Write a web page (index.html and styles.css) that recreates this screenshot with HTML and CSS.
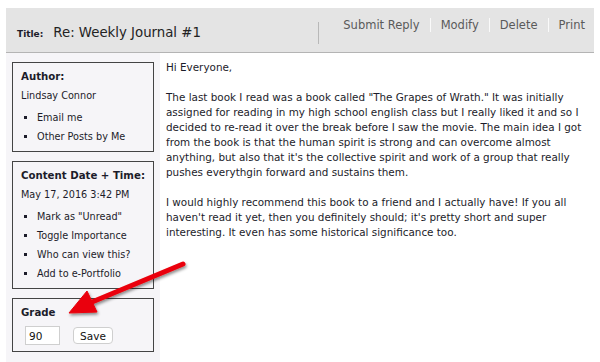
FILE: index.html
```html
<!DOCTYPE html>
<html lang="en">
<head>
    <meta charset="UTF-8">
    <title>Re: Weekly Journal #1</title>
    <link rel="stylesheet" href="styles.css">
</head>
<body>
    <div class="page">
        <div class="header">
            <div class="title">
                <span class="title-label">Title:</span>
                <span class="title-text">Re: Weekly Journal #1</span>
            </div>
            <div class="actions">
                <a href="#">Submit Reply</a>
                <a href="#">Modify</a>
                <a href="#">Delete</a>
                <a href="#">Print</a>
            </div>
        </div>

        <div class="content">
            <div class="sidebar">
                <div class="box">
                    <h4>Author:</h4>
                    <p>Lindsay Connor</p>
                    <ul>
                        <li>Email me</li>
                        <li>Other Posts by Me</li>
                    </ul>
                </div>
                <div class="box">
                    <h4>Content Date + Time:</h4>
                    <p>May 17, 2016 3:42 PM</p>
                    <ul>
                        <li>Mark as "Unread"</li>
                        <li>Toggle Importance</li>
                        <li>Who can view this?</li>
                        <li>Add to e-Portfolio</li>
                    </ul>
                </div>
                <div class="box grade">
                    <h4>Grade</h4>
                    <div class="grade-row">
                        <input type="text" value="90">
                        <button>Save</button>
                    </div>
                </div>
            </div>

            <div class="post">
                <p>Hi Everyone,</p>
                <p>The last book I read was a book called "The Grapes of Wrath." It was initially assigned for reading in my high school english class but I really liked it and so I decided to re-read it over the break before I saw the movie. The main idea I got from the book is that the human spirit is strong and can overcome almost anything, but also that it's the collective spirit and work of a group that really pushes everythgin forward and sustains them.</p>
                <p>I would highly recommend this book to a friend and I actually have! If you all haven't read it yet, then you definitely should; it's pretty short and super interesting. It even has some historical significance too.</p>
            </div>
        </div>

        <svg class="arrow" width="600" height="362" viewBox="0 0 600 362">
            <defs>
                <filter id="shadow" x="-20%" y="-20%" width="140%" height="140%">
                    <feDropShadow dx="1" dy="2" stdDeviation="1.5" flood-color="#000" flood-opacity="0.45"/>
                </filter>
            </defs>
            <g filter="url(#shadow)" fill="#ea0009" stroke="#ea0009">
                <line x1="183" y1="264" x2="92" y2="302" stroke-width="5" stroke-linecap="round"/>
                <polygon points="69,313 87,291 97,312" stroke-width="1" stroke-linejoin="round"/>
            </g>
        </svg>
    </div>
</body>
</html>
```

FILE: styles.css
```css
body {
    margin: 0;
    background: #fff;
    font-family: "DejaVu Sans", Verdana, sans-serif;
    color: #1c1c2a;
}

.page {
    position: relative;
    width: 600px;
    height: 362px;
    overflow: hidden;
    padding: 8px 6px 0 6px;
    box-sizing: border-box;
}

.header {
    display: flex;
    align-items: center;
    justify-content: space-between;
    height: 44px;
    background: #e4e4e4;
    border-bottom: 1px solid #b4b4b4;
}

.title {
    display: flex;
    align-items: baseline;
    padding: 5px 0 0 11px;
}

.title-label {
    font-size: 9px;
    font-weight: bold;
    margin-right: 10px;
}

.title-text {
    font-size: 13.3px;
    color: #222;
}

.actions {
    display: flex;
    align-items: flex-start;
    align-self: flex-end;
    height: 22px;
    margin-bottom: 8px;
    border-left: 1px solid #b8b8b8;
    padding-left: 14px;
    padding-right: 9px;
}

.actions a {
    font-size: 11.5px;
    line-height: 14px;
    margin-top: -4px;
    color: #5a5a5a;
    text-decoration: none;
    padding: 0 10px;
    border-left: 1px solid #fafafa;
}

.actions a:last-child {
    padding-right: 0;
}

.actions a:first-child {
    border-left: none;
}

.content {
    display: flex;
    height: 310px;
}

.sidebar {
    width: 154px;
    flex-shrink: 0;
    background: #f6f5f8;
    padding: 9px 0 0 6px;
    box-sizing: border-box;
}

.box {
    width: 142px;
    box-sizing: border-box;
    border: 1px solid #444;
    padding: 4px 0 5px 8px;
    margin-bottom: 9px;
    font-size: 9.7px;
    line-height: 19px;
}

.box h4 {
    margin: 0;
    font-size: 10.2px;
    font-weight: bold;
}

.box p {
    margin: 0;
}

.box ul {
    margin: 3px 0 0 0;
    padding-left: 16px;
    list-style: square;
}

.grade {
    padding-bottom: 6px;
}

.grade h4 {
    margin-bottom: 4px;
}

.grade-row {
    display: flex;
    align-items: center;
    gap: 13px;
    padding-left: 4px;
}

.grade-row input {
    width: 35px;
    height: 19px;
    box-sizing: border-box;
    border: 1px solid #cfcfcf;
    padding: 0 3px;
    font-family: "DejaVu Sans", Verdana, sans-serif;
    font-size: 10.5px;
    color: #111;
}

.grade-row button {
    width: 40px;
    height: 17px;
    background: #fff;
    border: 1px solid #cfcfcf;
    border-radius: 4px;
    font-family: "DejaVu Sans", Verdana, sans-serif;
    font-size: 10.5px;
    color: #111;
    padding: 0;
}

.post {
    padding: 7px 0 0 6px;
    font-size: 10.4px;
    line-height: 15px;
    width: 424px;
}

.post p {
    margin: 0 0 15px 0;
}

.arrow {
    position: absolute;
    left: 0;
    top: 0;
    pointer-events: none;
}
```
